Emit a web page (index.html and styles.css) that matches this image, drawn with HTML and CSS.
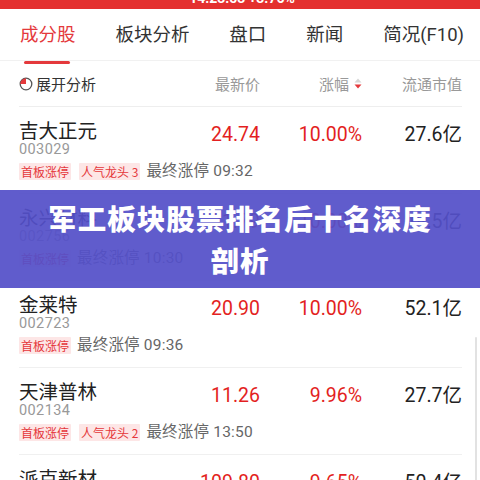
FILE: index.html
```html
<!DOCTYPE html>
<html lang="zh-CN">
<head>
<meta charset="utf-8">
<link rel="stylesheet" href="styles.css">
</head>
<body>
<div class="page">
  <div class="status"><span class="status-text">14:23:53 +3.76%</span></div>
  <nav class="tabs">
    <span class="tab active">成分股</span>
    <span class="tab">板块分析</span>
    <span class="tab">盘口</span>
    <span class="tab">新闻</span>
    <span class="tab">简况(F10)</span>
  </nav>
  <div class="head">
    <div class="head-name">
      <svg class="pie" width="14" height="14" viewBox="0 0 14 14"><circle cx="7" cy="7" r="5.8" fill="none" stroke="#555" stroke-width="1.3"/><path d="M7 7 L1.2 7 A5.8 5.8 0 0 1 7 1.2 Z" fill="#e4393c"/></svg>
      <span>展开分析</span>
    </div>
    <div class="hc">最新价</div>
    <div class="hc">涨幅<svg class="sort" width="8" height="11" viewBox="0 0 8 11"><path d="M4 0.5 L7.5 4.5 L0.5 4.5 Z" fill="#d6d6d6"/><path d="M4 10.5 L7.5 6.5 L0.5 6.5 Z" fill="#e4393c"/></svg></div>
    <div class="hc">流通市值</div>
  </div>

  <div class="row">
    <div class="main">
      <div class="who"><div class="name">吉大正元</div><div class="code">003029</div></div>
      <div class="val red">24.74</div>
      <div class="val red">10.00%</div>
      <div class="val dark">27.6亿</div>
    </div>
    <div class="tags"><span class="tag">首板涨停</span><span class="tag">人气龙头 3</span><span class="time">最终涨停 09:32</span></div>
  </div>

  <div class="row">
    <div class="main">
      <div class="who"><div class="name">永兴材料</div><div class="code">002756</div></div>
      <div class="val red">31.79</div>
      <div class="val red">10.00%</div>
      <div class="val dark">48.5亿</div>
    </div>
    <div class="tags"><span class="tag">首板涨停</span><span class="time">最终涨停 10:30</span></div>
  </div>

  <div class="row">
    <div class="main">
      <div class="who"><div class="name">金莱特</div><div class="code">002723</div></div>
      <div class="val red">20.90</div>
      <div class="val red">10.00%</div>
      <div class="val dark">52.1亿</div>
    </div>
    <div class="tags"><span class="tag">首板涨停</span><span class="time">最终涨停 09:36</span></div>
  </div>

  <div class="row">
    <div class="main">
      <div class="who"><div class="name">天津普林</div><div class="code">002134</div></div>
      <div class="val red">11.26</div>
      <div class="val red">9.96%</div>
      <div class="val dark">27.7亿</div>
    </div>
    <div class="tags"><span class="tag">首板涨停</span><span class="tag">人气龙头 2</span><span class="time">最终涨停 13:50</span></div>
  </div>

  <div class="row">
    <div class="main">
      <div class="who"><div class="name">派克新材</div><div class="code">605123</div></div>
      <div class="val red">109.80</div>
      <div class="val red">9.65%</div>
      <div class="val dark">50.4亿</div>
    </div>
    <div class="tags"><span class="tag">首板涨停</span><span class="time">最终涨停 14:02</span></div>
  </div>

  <div class="scrollbar"></div>
  <div class="banner"><h1 class="title">军工板块股票排名后十名深度<br>剖析</h1></div>
</div>
</body>
</html>
```
FILE: styles.css
```css
* { box-sizing: border-box; }
html, body { margin: 0; padding: 0; background: #fff; }
body { width: 480px; height: 480px; overflow: hidden; font-family: Roboto, "Noto Sans CJK SC", sans-serif; color: #222; }
.page { position: relative; width: 480px; height: 480px; overflow: hidden; }

.status { height: 9px; background: #e4302f; overflow: hidden; text-align: center; }
.status-text { display: block; color: #fff; font-weight: bold; font-size: 14px; line-height: 14px; margin-top: -9px; padding-left: 4px; }

.tabs { height: 52px; display: flex; justify-content: space-between; align-items: center; padding: 0 16px 0 20px; border-bottom: 1px solid #f1f1f1; }
.tab { position: relative; font-size: 18.5px; color: #333; line-height: 26px; padding-top: 1px; }
.tab.active { color: #e4393c; }
.tab.active::after { content: ""; position: absolute; left: 4px; right: 6px; bottom: -16px; height: 3px; border-radius: 2px; background: #e4393c; }

.head { margin: 0 18px 0 19px; height: 46px; display: grid; grid-template-columns: 141px 100px 102px 100px; align-items: center; border-bottom: 1px solid #eeeeee; }
.head-name { display: flex; align-items: center; gap: 3px; font-size: 15px; color: #333; }
.pie { display: block; }
.hc { text-align: right; font-size: 15px; color: #999; display: flex; justify-content: flex-end; align-items: center; }
.sort { margin-left: 5px; }

.row { margin: 0 18px 0 19px; height: 87px; padding-top: 11px; border-bottom: 1px solid #f0f0f0; }
.main { display: grid; grid-template-columns: 141px 100px 102px 100px; align-items: start; }
.name { font-size: 19.5px; line-height: 24px; color: #222; font-family: "Noto Sans CJK SC", sans-serif; }
.code { font-size: 14.5px; line-height: 16px; color: #999; letter-spacing: 0.4px; }
.val { text-align: right; font-size: 19.5px; line-height: 24px; margin-top: 5px; }
.red { color: #e31f22; }
.dark { color: #222; }

.tags { display: flex; align-items: center; margin-top: 5px; height: 17px; }
.tag { font-size: 12px; line-height: 17px; padding: 0 2px; background: #fde6e6; color: #e5373a; margin-right: 8px; border-radius: 1px; font-family: "Noto Sans CJK SC", sans-serif; }
.tag + .tag { padding: 0 2px; }
.time { font-size: 15.5px; line-height: 17px; color: #666; margin-left: -2px; letter-spacing: 0.2px; }

.scrollbar { position: absolute; left: 475px; top: 337px; width: 2px; height: 150px; background: #e2e2e2; border-radius: 1px; }

.banner { position: absolute; left: 0; right: 0; top: 190px; height: 98px; background: rgba(84, 80, 200, 0.93); display: flex; align-items: center; justify-content: center; }
.title { margin: 0; color: #fff; font-family: "Noto Sans CJK SC", sans-serif; font-weight: 900; font-size: 28.5px; line-height: 42px; text-align: center; letter-spacing: 1px; }
```
